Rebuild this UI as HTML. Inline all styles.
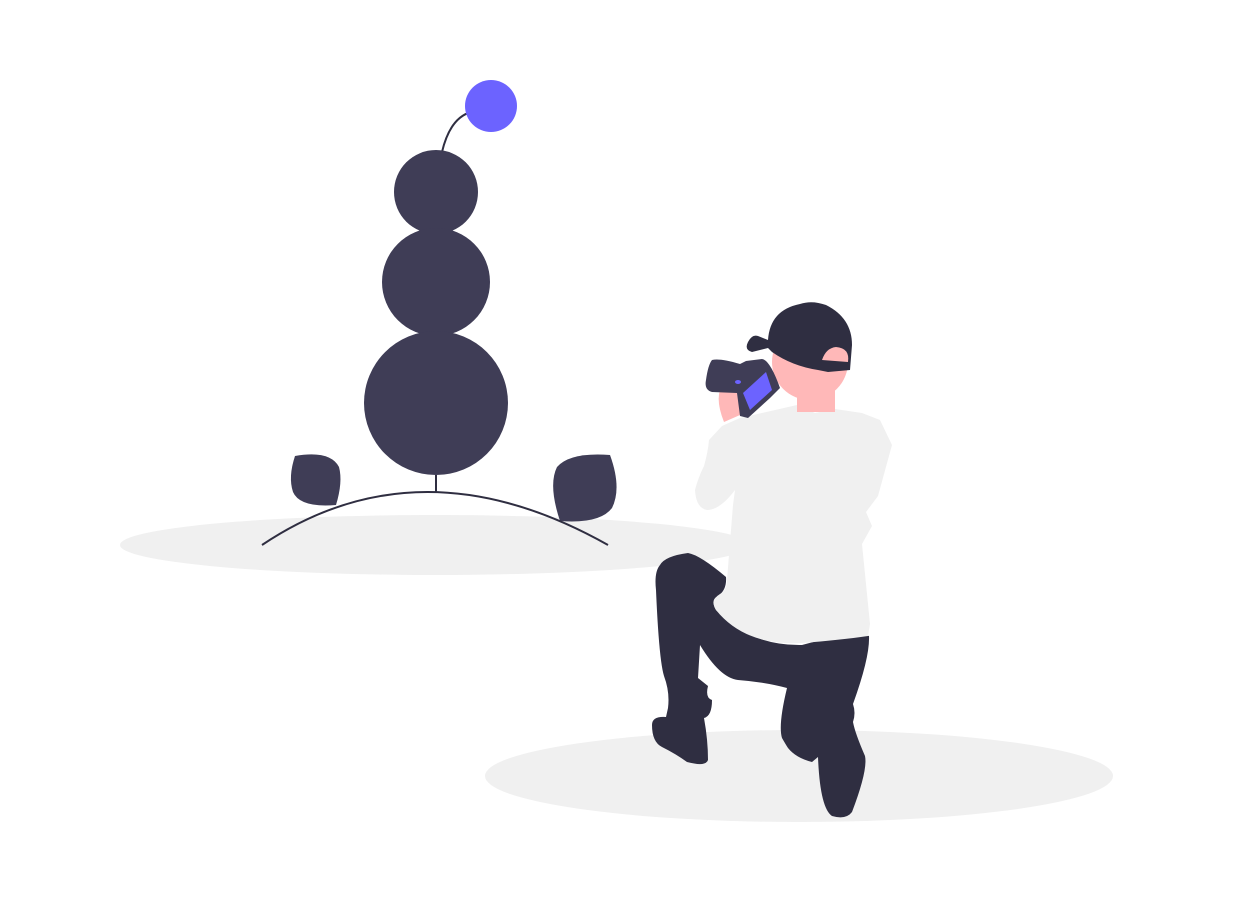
<!DOCTYPE html>
<html><head><meta charset="utf-8"><style>html,body{margin:0;padding:0;background:#fff}svg{display:block}</style></head>
<body>
<svg width="1233" height="902" viewBox="0 0 1233 902" xmlns="http://www.w3.org/2000/svg">
<ellipse cx="435" cy="545" rx="315" ry="30" fill="#f0f0f0"/>
<ellipse cx="799" cy="776" rx="314" ry="46" fill="#f0f0f0"/>
<path d="M442 152 Q450 118 471 112" fill="none" stroke="#2f2e41" stroke-width="2"/>
<circle cx="491" cy="106" r="26" fill="#6c63ff"/>
<circle cx="436" cy="192" r="42" fill="#3f3d56"/>
<circle cx="436" cy="282" r="54" fill="#3f3d56"/>
<circle cx="436" cy="403" r="72" fill="#3f3d56"/>
<line x1="436" y1="475" x2="436" y2="493" stroke="#2f2e41" stroke-width="2"/>
<path d="M295 456 Q330 450 339 467 Q343 482 336 505 Q300 508 293 492 Q288 477 295 456Z" fill="#3f3d56"/>
<path d="M610 455 Q570 452 557 467 Q548 485 560 521 Q600 524 612 508 Q622 488 610 455Z" fill="#3f3d56"/>
<path d="M262 545 Q420 439 608 545" fill="none" stroke="#2f2e41" stroke-width="2"/>
<path d="M688 553 Q665 556 660 565 Q654 572 656 590 Q659 660 664 676 Q670 692 668 708 L666 717 Q652 716 652 725 Q652 742 662 747 Q676 754 687 762 Q706 767 708 760 Q708 740 704 718 Q712 716 712 700 Q705 698 708 686 L698 678 L700 645 Q720 678 738 680 Q765 682 787 688 Q778 725 782 738 Q786 745 788 748 Q796 758 812 762 L818 757 Q820 808 832 816 Q846 820 852 812 Q868 770 865 756 Q855 733 853 722 Q856 713 853 704 Q870 657 869 636 Q850 632 802 645 Q750 646 716 610 Q710 600 718 596 Q727 590 726 577 Q700 555 688 553Z" fill="#2f2e41"/>
<path d="M740 418 L797 405 L815 413 L835 409 L862 413 L880 420 L892 445 L878 496 L866 512 L872 526 L862 544 L870 624 L868 636 Q840 640 802 643 Q745 646 716 610 Q710 600 720 594 Q727 590 727 580 L733 505 L735 490 Q720 510 707 510 Q696 508 695 490 Q698 478 704 466 Q708 452 709 440 L722 426Z" fill="#f0f0f0"/>
<rect x="797" y="386" width="38" height="26" fill="#ffb8b8"/>
<circle cx="810" cy="362" r="38" fill="#ffb8b8"/>
<path d="M720 390 Q726 380 736 387 Q742 398 740 415 L724 422 Q716 402 720 390Z" fill="#ffb8b8"/>
<path d="M712 360 Q720 358 740 364 L746 361 L762 359 Q770 360 780 388 L770 398 L748 418 L740 416 L737 393 L712 392 Q704 390 706 380 Q708 365 712 360Z" fill="#3f3d56"/>
<path d="M743 393 L766 372 L772 390 L750 410Z" fill="#6c63ff"/>
<ellipse cx="738" cy="382" rx="3" ry="2" fill="#6c63ff"/>
<path d="M768 340 Q770 310 800 304 Q812 300 826 305 Q852 318 852 345 L850 370 L828 372 L818 370 Q792 366 772 352 L768 348 L752 352 Q744 350 748 342 Q752 334 758 336Z" fill="#2f2e41"/>
<path d="M822 360 Q826 348 836 347 Q850 348 848 362Z" fill="#ffb8b8"/>
</svg>
</body></html>
